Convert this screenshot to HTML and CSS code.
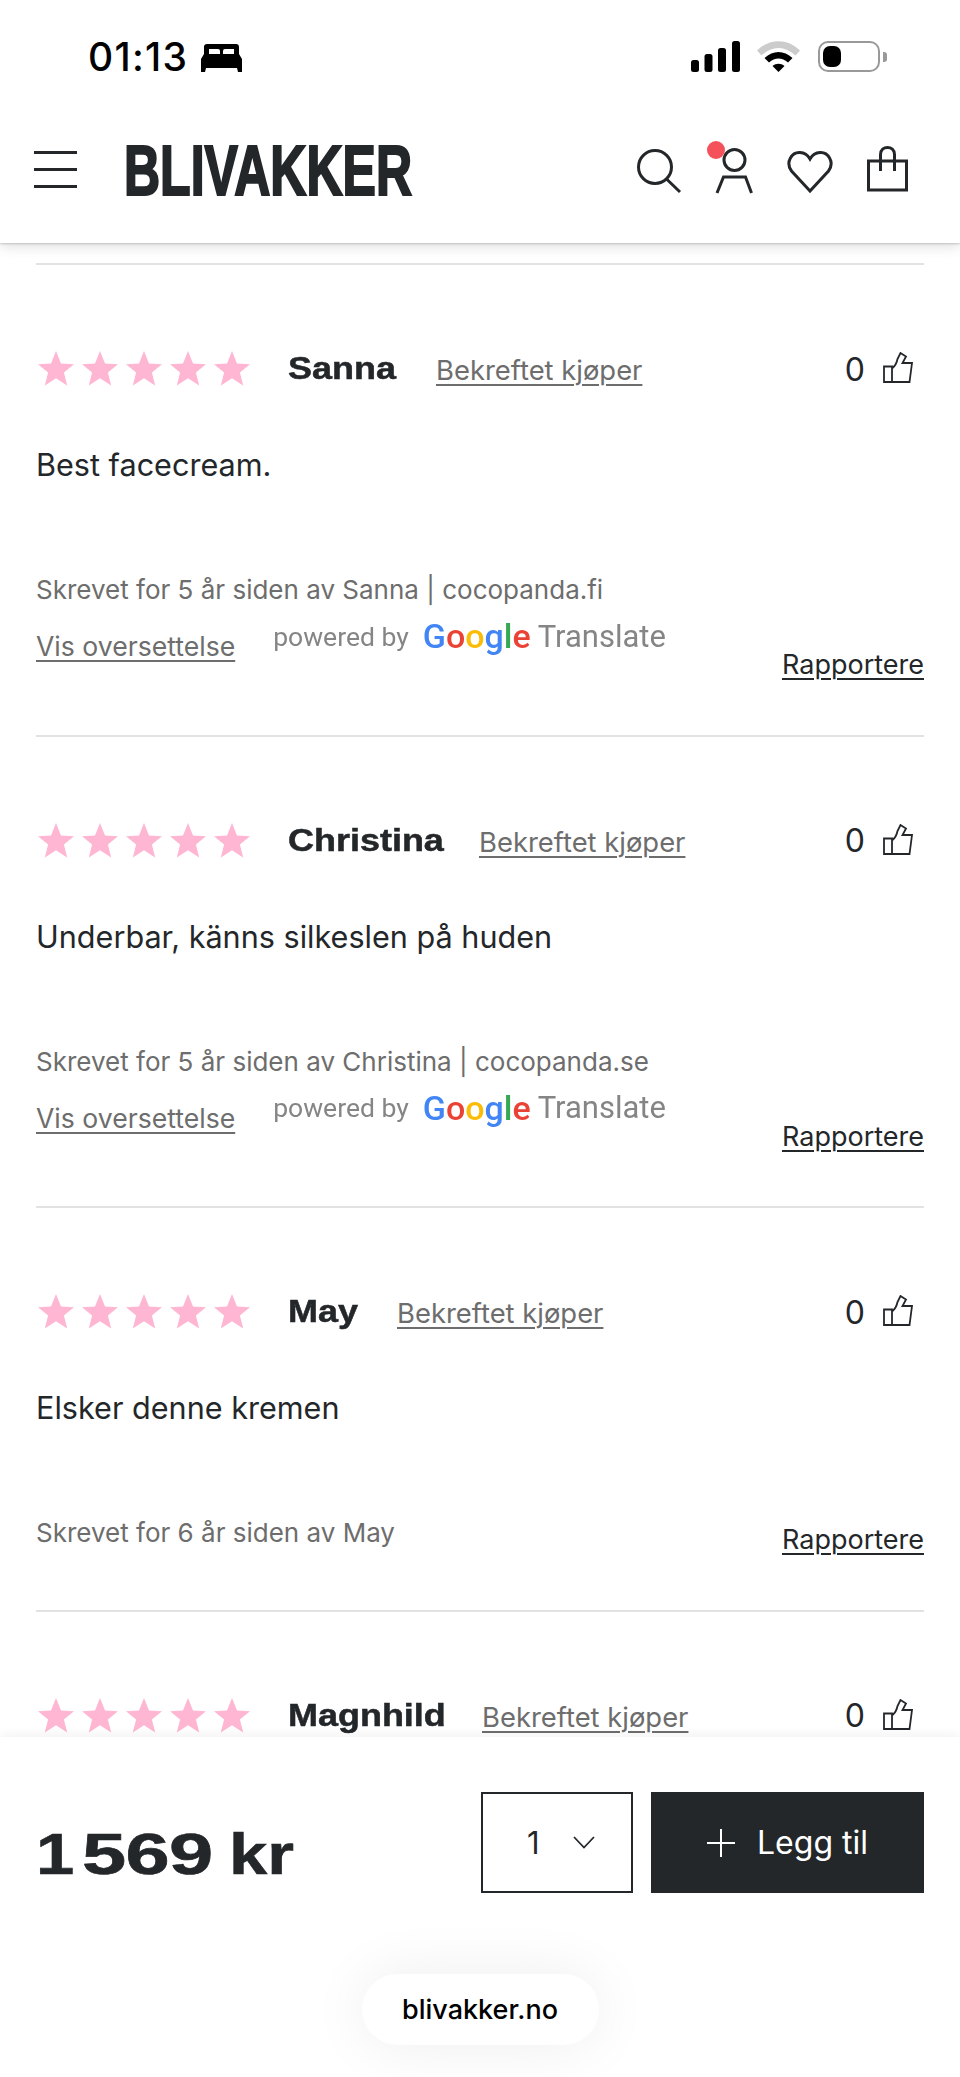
FILE: index.html
```html
<!DOCTYPE html>
<html lang="no">
<head>
<meta charset="utf-8">
<title>Blivakker</title>
<link rel="stylesheet" href="styles.css">
</head>
<body>
<svg class="defs" width="0" height="0" aria-hidden="true">
  <defs>
    <symbol id="star" viewBox="0 0 36 35"><polygon points="18,0 23,12.6 36,13.3 25.9,21.6 29.2,34.6 18,27.3 6.8,34.6 10.1,21.6 0,13.3 13,12.6"/></symbol>
    <symbol id="thumb" viewBox="0 0 30 31"><path d="M1 14.500H9V30H1ZM9 16.500C12 14 14 10 14.500 7L17.500 1L23 4.500L19.500 11H29L26.500 30H9" fill="none" stroke="#24272a" stroke-width="1.800" stroke-linejoin="miter"/></symbol>
  </defs>
</svg>
<header class="topbar">
  <div class="status">
    <div class="status-left">
      <span class="time">01:13</span>
      <svg class="bed" width="41" height="28" viewBox="0 0 41 28"><path d="M6 0H35Q38 0 38 3V10L41 15V28H37L36 24H5L4 28H0V15L3 10V3Q3 0 6 0ZM8 5V10H19V7Q19 5 17 5ZM22 7V10H33V5H24Q22 5 22 7Z" fill="#000" fill-rule="evenodd"/></svg>
    </div>
    <div class="status-right">
      <svg class="signal" width="49" height="31" viewBox="0 0 49 31"><rect x="0" y="19" width="8" height="12" rx="2.500"/><rect x="13.500" y="13" width="8" height="18" rx="2.500"/><rect x="27" y="7" width="8" height="24" rx="2.500"/><rect x="41" y="0" width="8" height="31" rx="2.500"/></svg>
      <svg class="wifi" width="43" height="31" viewBox="0 0 43 31"><path d="M0 9.500C12 -3 31 -3 43 9.500L38.500 14.500C28 4.500 15 4.500 4.500 14.500Z" fill="#ccc"/><path d="M7.500 17C16 9 27 9 35.500 17L31 21.500C25 16 18 16 12 21.500Z"/><path d="M15.500 25C19 22 24 22 27.500 25L21.500 31Z"/></svg>
      <div class="battery"><span class="battery-level"></span></div>
      <span class="battery-nub"></span>
    </div>
  </div>
  <nav class="nav">
    <div class="burger"><span></span><span></span><span></span></div>
    <svg class="logo" width="288" height="56" viewBox="0 0 288 56"><text x="0" y="53" textLength="288" lengthAdjust="spacingAndGlyphs" class="logo-text">BLIVAKKER</text></svg>
    <div class="nav-icons">
      <svg width="48" height="52" viewBox="0 0 48 52" class="ic ic-search"><circle cx="19" cy="22" r="16.500"/><path d="M30.500 34L44 47"/></svg>
      <div class="account">
        <svg width="48" height="52" viewBox="0 0 48 52" class="ic"><circle cx="25.500" cy="15" r="10.500"/><path d="M8 48L14.500 32H36.500L42.500 48"/></svg>
        <span class="badge"></span>
      </div>
      <svg width="48" height="52" viewBox="0 0 48 52" class="ic"><path d="M24 46L5.500 26C-1 17 6 7 14 7.500C19 7.800 22 10.500 24 14C26 10.500 29 7.800 34 7.500C42 7 49 17 42.500 26Z"/></svg>
      <svg width="48" height="52" viewBox="0 0 48 52" class="ic"><path d="M5.500 16H43.500V45H5.500ZM17.500 26V9.500C17.500 0 31.500 0 31.500 9.500V26"/></svg>
    </div>
  </nav>
</header>

<main class="reviews">
  <article class="review">
    <div class="review-head">
      <div class="stars"><svg><use href="#star"/></svg><svg><use href="#star"/></svg><svg><use href="#star"/></svg><svg><use href="#star"/></svg><svg><use href="#star"/></svg></div>
      <span class="name w-sanna"><span>Sanna</span></span>
      <a class="verified" href="#">Bekreftet kjøper</a>
      <div class="likes"><span>0</span><svg class="thumb"><use href="#thumb"/></svg></div>
    </div>
    <p class="body">Best facecream.</p>
    <div class="review-foot">
      <div class="meta">
        <div class="written">Skrevet for 5 år siden av Sanna | cocopanda.fi</div>
        <div class="translate-row">
          <a class="show" href="#">Vis oversettelse</a>
          <div class="gt"><span class="gt-by">powered by</span><span class="gt-g"><b class="c1">G</b><b class="c2">o</b><b class="c3">o</b><b class="c1">g</b><b class="c4">l</b><b class="c2">e</b></span><span class="gt-t">Translate</span></div>
        </div>
      </div>
      <a class="report" href="#">Rapportere</a>
    </div>
  </article>
  <article class="review">
    <div class="review-head">
      <div class="stars"><svg><use href="#star"/></svg><svg><use href="#star"/></svg><svg><use href="#star"/></svg><svg><use href="#star"/></svg><svg><use href="#star"/></svg></div>
      <span class="name w-christina"><span>Christina</span></span>
      <a class="verified" href="#">Bekreftet kjøper</a>
      <div class="likes"><span>0</span><svg class="thumb"><use href="#thumb"/></svg></div>
    </div>
    <p class="body">Underbar, känns silkeslen på huden</p>
    <div class="review-foot">
      <div class="meta">
        <div class="written">Skrevet for 5 år siden av Christina | cocopanda.se</div>
        <div class="translate-row">
          <a class="show" href="#">Vis oversettelse</a>
          <div class="gt"><span class="gt-by">powered by</span><span class="gt-g"><b class="c1">G</b><b class="c2">o</b><b class="c3">o</b><b class="c1">g</b><b class="c4">l</b><b class="c2">e</b></span><span class="gt-t">Translate</span></div>
        </div>
      </div>
      <a class="report" href="#">Rapportere</a>
    </div>
  </article>
  <article class="review">
    <div class="review-head">
      <div class="stars"><svg><use href="#star"/></svg><svg><use href="#star"/></svg><svg><use href="#star"/></svg><svg><use href="#star"/></svg><svg><use href="#star"/></svg></div>
      <span class="name w-may"><span>May</span></span>
      <a class="verified" href="#">Bekreftet kjøper</a>
      <div class="likes"><span>0</span><svg class="thumb"><use href="#thumb"/></svg></div>
    </div>
    <p class="body">Elsker denne kremen</p>
    <div class="review-foot">
      <div class="meta">
        <div class="written">Skrevet for 6 år siden av May</div>
      </div>
      <a class="report" href="#">Rapportere</a>
    </div>
  </article>
  <article class="review">
    <div class="review-head">
      <div class="stars"><svg><use href="#star"/></svg><svg><use href="#star"/></svg><svg><use href="#star"/></svg><svg><use href="#star"/></svg><svg><use href="#star"/></svg></div>
      <span class="name w-magnhild"><span>Magnhild</span></span>
      <a class="verified" href="#">Bekreftet kjøper</a>
      <div class="likes"><span>0</span><svg class="thumb"><use href="#thumb"/></svg></div>
    </div>
  </article>
</main>

<footer class="buybar">
  <div class="buy-row">
    <div class="price"><span class="p-one">1</span> <span class="p-num">569</span> <span class="p-unit">kr</span></div>
    <div class="qty">
      <span>1</span>
      <svg width="22" height="13" viewBox="0 0 22 13"><path d="M1 1L11 11.500L21 1" fill="none" stroke="#24272a" stroke-width="1.800"/></svg>
    </div>
    <button class="add" type="button">
      <svg width="28" height="28" viewBox="0 0 28 28"><path d="M14 0V28M0 14H28" stroke="#fff" stroke-width="2" fill="none"/></svg>
      <span>Legg til</span>
    </button>
  </div>
  <div class="url">blivakker.no</div>
</footer>
</body>
</html>
```
FILE: styles.css
```css
* { box-sizing: border-box; }
html, body { margin: 0; padding: 0; }
body {
  width: 960px;
  height: 2077px;
  overflow: hidden;
  display: flex;
  flex-direction: column;
  background: #fff;
  color: #24272a;
  font-family: Inter, "Liberation Sans", sans-serif;
}
.defs { position: absolute; }

/* top */
.topbar {
  height: 243px;
  flex: none;
  background: #fff;
  position: relative;
  z-index: 2;
  box-shadow: 0 1px 2px rgba(0,0,0,.18), 0 4px 12px rgba(0,0,0,.12);
}
.status {
  height: 114px;
  display: flex;
  justify-content: space-between;
  padding: 41px 73px 0 88px;
}
.status-left { display: flex; align-items: flex-start; gap: 13px; color: #000; }
.time { font-size: 39px; font-weight: 500; line-height: 32px; letter-spacing: 1.300px; color: #000; }
.bed { margin-top: 3px; }
.status-right { display: flex; align-items: flex-start; color: #000; }
.signal { fill: #000; margin-right: 17px; }
.wifi { fill: #000; margin-right: 18px; }
.battery {
  width: 62px;
  height: 31px;
  border: 2px solid #999;
  border-radius: 10px;
  padding: 3px;
}
.battery-level { display: block; width: 18px; height: 21px; background: #000; border-radius: 7px; }
.battery-nub { width: 4px; height: 10px; margin: 11px 0 0 3px; background: #999; border-radius: 0 3px 3px 0; }

.nav { display: flex; align-items: center; height: 104px; padding: 0 49px 0 34px; margin-top: 3px; }
.burger { width: 43px; display: flex; flex-direction: column; gap: 14px; margin-right: 49px; }
.burger span { display: block; height: 3px; background: #24272a; }
.logo { display: block; overflow: visible; margin-left: -2px; margin-top: 1px; }
.logo-text { font-family: "Liberation Sans", sans-serif; font-weight: 700; font-size: 70px; fill: #24272a; stroke: #24272a; stroke-width: 2.200px; }
.nav-icons { display: flex; align-items: center; margin-left: auto; gap: 27px; margin-top: 3px; }
.ic-search { margin-right: -2px; }
.account { position: relative; margin-right: 2px; }
.account + .ic { margin-right: 2px; }
.ic { display: block; fill: none; stroke: #24272a; stroke-width: 3; }
.badge {
  position: absolute;
  left: -2px;
  top: -4px;
  width: 18px;
  height: 18px;
  border-radius: 50%;
  background: #f5515a;
}

/* reviews */
.reviews { flex: 1; min-height: 0; overflow: hidden; padding: 20px 36px 0; }
.review { border-top: 2px solid #e2e2e2; }
.review-head { display: flex; align-items: center; height: 52px; margin-top: 78px; }
.stars { display: flex; gap: 8px; width: 252px; padding-left: 2px; flex: none; margin-top: -1px; }
.stars svg { width: 36px; height: 35px; fill: #ffb6d3; }
.name { display: block; font-family: "Liberation Sans", sans-serif; font-weight: 700; font-size: 31px; line-height: 52px; white-space: nowrap; margin-right: 38px; }
.name span { display: inline-block; transform: scaleX(1.16); transform-origin: left center; -webkit-text-stroke: .5px #24272a; }
.w-sanna { width: 110px; }
.w-christina { width: 153px; }
.w-may { width: 71px; }
.w-magnhild { width: 156px; }
.verified { font-size: 27.400px; line-height: 36px; margin-top: 2px; color: #6d6d6d; text-decoration: underline; text-underline-offset: 4px; text-decoration-thickness: 2px; }
.show { font-size: 26.600px; line-height: 36px; color: #6d6d6d; text-decoration: underline; text-underline-offset: 4px; text-decoration-thickness: 2px; }
.likes { margin-left: auto; display: flex; align-items: center; gap: 18px; padding-right: 11px; font-size: 32px; }
.thumb { width: 30px; height: 31px; display: block; margin-top: -3px; }
.body { margin: 48px 0 0; font-size: 30.600px; line-height: 44px; }
.review-foot { display: flex; justify-content: space-between; margin-top: 85px; padding-bottom: 58.500px; }
.written { font-size: 26px; line-height: 36px; color: #6d6d6d; }
.translate-row { display: flex; align-items: flex-start; gap: 36px; margin-top: 10px; padding-bottom: 12px; }
.show { margin-top: 10px; }
.gt { display: flex; align-items: center; height: 36px; font-family: Roboto, sans-serif; filter: blur(.7px); margin-left: 2px; }
.gt-by { font-size: 26.500px; color: #858585; margin-right: 14px; }
.gt-g { font-size: 34px; margin-right: 7px; }
.gt-g b { font-weight: 500; }
.gt-t { font-size: 31px; color: #858585; }
.c1 { color: #4285f4; }
.c2 { color: #ea4335; }
.c3 { color: #fbbc05; }
.c4 { color: #34a853; }
.report { align-self: flex-end; margin-bottom: -7px; font-size: 27px; line-height: 36px; color: #24272a; text-decoration: underline; text-underline-offset: 4px; text-decoration-thickness: 2px; }

/* buy bar */
.buybar {
  flex: none;
  height: 340px;
  background: #fff;
  position: relative;
  z-index: 2;
  box-shadow: 0 -3px 10px rgba(0,0,0,.05);
  padding: 55px 36px 0;
}
.buy-row { display: flex; align-items: flex-start; height: 101px; }
.price { margin-right: auto; margin-top: 32px; font-family: "Liberation Sans", sans-serif; font-weight: 700; font-size: 58px; line-height: 60px; white-space: nowrap; -webkit-text-stroke: .6px #24272a; }
.price span { display: inline-block; transform-origin: left center; }
.p-one { width: 30px; transform: scaleX(1.185); }
.p-num { width: 131px; transform: scaleX(1.37); letter-spacing: -.5px; }
.p-unit { transform: scaleX(1.185); }
.qty {
  width: 152px;
  height: 101px;
  border: 2px solid #24272a;
  display: flex;
  align-items: center;
  gap: 33px;
  padding-left: 44px;
  font-size: 31px;
}
.add {
  width: 273px;
  height: 101px;
  margin-left: 18px;
  background: #24272a;
  color: #fff;
  border: 0;
  display: flex;
  align-items: center;
  justify-content: center;
  gap: 22px;
  font: inherit;
  font-size: 32px;
}
.url {
  width: 237px;
  height: 71px;
  margin: 81px auto 0;
  border-radius: 36px;
  background: #fff;
  box-shadow: 0 0 60px rgba(0,0,0,.07);
  display: flex;
  align-items: center;
  justify-content: center;
  font-size: 27px;
  font-weight: 500;
  color: #000;
}
```
